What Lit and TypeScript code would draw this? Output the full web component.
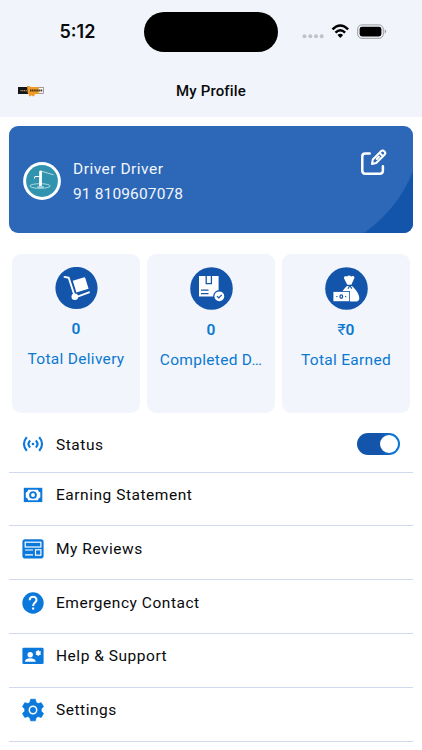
import { LitElement, html, css, svg } from "lit";
import { customElement } from "lit/decorators.js";

const stats = [
  {
    value: "0", label: "Total Delivery", cls: "delivery",
    icon: svg`<circle cx="21.5" cy="21" r="21.1" fill="#1455ac"/>
      <path d="M9.5 9.9 L13.7 10.7 L19.5 28.5 M20.5 30.3 L34 25.3" fill="none" stroke="#fff" stroke-width="1.9" stroke-linecap="round" stroke-linejoin="round"/>
      <circle cx="19.8" cy="29.7" r="3.3" fill="#fff"/>
      <path d="M17.8 13.7 L28.6 10.4 Q30 10.1 30.4 11.5 L33.6 21.7 L21.4 25.5 Z" fill="#fff"/>`,
  },
  {
    value: "0", label: "Completed D…", cls: "completed",
    icon: svg`<circle cx="21.5" cy="21.5" r="21.3" fill="#1455ac"/>
      <path d="M9 9H28.6V29.5H9Z" fill="#fff"/>
      <path d="M16.2 9V16.6H21.4V9M11 23.2H18.5M11 26.6H18.5" fill="none" stroke="#1455ac" stroke-width="1.3"/>
      <circle cx="29.3" cy="29.3" r="6.2" fill="#1455ac"/><circle cx="29.3" cy="29.3" r="4.9" fill="#fff"/>
      <path d="M27 29.1l1.7 1.8 3-3" fill="none" stroke="#1455ac" stroke-width="1.3"/>`,
  },
  {
    value: "₹0", label: "Total Earned", cls: "earned",
    icon: svg`<circle cx="21.5" cy="21.5" r="21.3" fill="#1455ac"/>
      <path d="M22.3 17.8C20.7 14.3 19.2 12 18.9 10.7C19.5 8.6 21.4 9.6 22 9.5C23 8.2 25 8.2 26.1 9.5C27.6 8.4 29 8.8 29.5 10.4C29 12.4 27.5 14.6 26.4 17.8Z" fill="#fff"/>
      <path d="M22 19H27C31.5 23 34.5 28 34.3 31.6Q34.1 34.4 31.3 34.4H23V24.7H17.2C18.2 22.7 20.2 20.8 22 19Z" fill="#fff"/>
      <path d="M24.7 18.8l-1.7 3M25 18.8l1.8 2.8" stroke="#1455ac" stroke-width="1.2"/>
      <rect x="8" y="24.5" width="16.6" height="10.2" fill="#fff" stroke="#1455ac" stroke-width=".8"/>
      <ellipse cx="16.3" cy="29.6" rx="1.3" ry="1.7" fill="none" stroke="#1455ac" stroke-width="1.3"/><path d="M11.2 29.6h1.3M20 29.6h1.3" stroke="#1455ac"/>`,
  },
];

const rows = [
  {
    label: "Status", cls: "status", toggle: true,
    icon: svg`<g fill="none" stroke="#0b78dc" stroke-width="2.1"><path d="M5.8 5.2Q.1 12 5.8 18.8M18.2 5.2Q23.9 12 18.2 18.8M9.2 8.4Q5.7 12 9.2 15.6M14.8 8.4Q18.3 12 14.8 15.6"/></g><circle cx="12" cy="12" r="1.3" fill="#0b78dc"/>`,
  },
  {
    label: "Earning Statement", cls: "earning",
    icon: svg`<rect x="2.8" y="4.8" width="18.5" height="14.3" fill="#0b78dc"/><path d="M7.1 6.8H17Q17 9 19.3 9.5V14.5Q17 15 17 17.2H7.1Q7.1 15 4.8 14.5V9.5Q7.1 9 7.1 6.8Z" fill="#fff"/><circle cx="12" cy="12" r="2.9" fill="none" stroke="#0b78dc" stroke-width="1.9"/>`,
  },
  {
    label: "My Reviews", cls: "reviews",
    icon: svg`<rect x="1.4" y="2.3" width="21.2" height="19.2" rx="2.8" fill="#0b78dc"/><g fill="none" stroke="#fff" stroke-width="1.2"><rect x="4.2" y="5.2" width="15.7" height="4.8"/><rect x="14.5" y="12.8" width="5.4" height="5.4"/><path d="M4 13H12M4 17.8H12"/></g>`,
  },
  {
    label: "Emergency Contact", cls: "emergency",
    icon: svg`<circle cx="12" cy="12" r="10.7" fill="#0b78dc"/><path d="M8.7 9.2C8.8 4.7 15.5 4.7 15.5 9C15.5 11.6 12.2 11.7 12.2 15" fill="none" stroke="#fff" stroke-width="2"/><rect x="11.1" y="16.5" width="2.1" height="2.1" fill="#fff"/>`,
  },
  {
    label: "Help & Support", cls: "help",
    icon: svg`<rect x="1.4" y="3.8" width="21.2" height="16.2" rx="1.3" fill="#0b78dc"/><circle cx="9.2" cy="10.7" r="2.7" fill="#fff"/><path d="M3.9 17.7Q4 14.4 9.2 14.2Q14.5 14.4 14.7 17.7Z" fill="#fff"/><path d="M17.3 6.2v5.6M14.9 7.6l4.8 2.8M14.9 10.4l4.8-2.8" stroke="#fff" stroke-width="1.6"/><circle cx="17.3" cy="9" r="1.8" fill="#fff"/>`,
  },
  {
    label: "Settings", cls: "settings",
    icon: svg`<path d="M9.7 1.3h4.6l.8 3.1 2 1.2 3.1-.9 2.3 4-2.3 2.2v2.3l2.3 2.2-2.3 4-3.1-.9-2 1.2-.8 3.1H9.7l-.8-3.1-2-1.2-3.1.9-2.3-4 2.3-2.2v-2.3L1.5 8.7l2.3-4 3.1.9 2-1.2Z" fill="#0b78dc" stroke="#0b78dc" stroke-width=".8" stroke-linejoin="round"/><circle cx="12" cy="12" r="3.7" fill="none" stroke="#fff" stroke-width="1.5"/>`,
  },
];

@customElement("app-root")
export class AppRoot extends LitElement {
  static styles = css`
    :host { display: block; height: 750px; overflow: hidden; background: #fff; font-family: Roboto, "Noto Sans", sans-serif; color: #090a0c; }
    * { box-sizing: border-box; }
    svg { display: block; flex: none; }
    .header { height: 117px; background: #f1f5fb; }
    .bar { height: 64px; display: grid; grid-template-columns: 144px 134px 144px; }
    .time { padding: 21px 0 0 59.5px; font: 600 18px/22px Inter, sans-serif; letter-spacing: 0; }
    .island { margin-top: 12px; height: 40px; border-radius: 20px; background: #000; }
    .signals { padding: 23px 0 0 24px; }
    .nav { height: 53px; display: grid; grid-template-columns: 1fr auto 1fr; align-items: center; }
    .logo { margin-left: 18px; }
    .title { padding-top: 1px; font-size: 15px; font-weight: 500; line-height: 20px; letter-spacing: .15px; }
    .profile { position: relative; margin: 8.5px 9px 0; height: 107.5px; border-radius: 9px; background: #2d67b7; overflow: hidden; display: flex; color: #fff; }
    .corner { position: absolute; right: 0; bottom: 0; }
    .avatar { margin: 36px 0 0 13.5px; }
    .person { margin: 31px 0 0 12.5px; flex: 1; font-size: 15.5px; line-height: 25px; color: #f1f6fe; }
    .name { letter-spacing: .5px; }
    .phone { letter-spacing: .14px; }
    .edit { margin: 21.5px 25px 0 0; }
    .stats { margin: 21px 12px 0; display: grid; grid-template-columns: repeat(3, 128px); gap: 7px; }
    .stat { height: 159px; border-radius: 9px; background: #f2f6fc; padding-top: 12.5px; display: flex; flex-direction: column; align-items: center; color: #0b78d1; }
    .value { margin-top: 10px; font-size: 15.5px; line-height: 20px; font-weight: 600; }
    .caption { margin-top: 10.5px; font-size: 15.5px; line-height: 20px; white-space: nowrap; letter-spacing: .3px; }
    .delivery .value { margin-top: 9px; }
    .delivery .caption { margin-top: 10px; }
    .rupee { font-weight: 400; }
    .row { margin: 0 9px; height: 53.75px; padding: 0 13px 7.5px 11.5px; border-bottom: 1px solid #d1d9ef; display: flex; align-items: center; }
    .status { height: 59.5px; padding: 4px 13px 0 11.5px; }
    .status .text { padding-top: 1px; }
    .earning { padding-bottom: 7px; }
    .settings { height: 54.5px; padding-bottom: 8px; }
    .text { margin-left: 11.5px; font-size: 15.5px; line-height: 20px; letter-spacing: .53px; }
    .toggle { margin-left: auto; width: 43px; height: 22px; border-radius: 11px; padding: 2px; background: linear-gradient(90deg, #1455ac 55%, #0c76da 85%); display: flex; justify-content: flex-end; }
    .knob { width: 18px; height: 18px; border-radius: 50%; background: #fff; }
  `;

  render() {
    return html`
      <header class="header">
        <div class="bar">
          <div class="time">5:12</div>
          <div class="island"></div>
          <div class="signals">
            <svg width="86" height="18" viewBox="0 0 86 18">
              <g fill="#bfc3c9"><circle cx="2.5" cy="13.3" r="2"/><circle cx="8.3" cy="13.3" r="2"/><circle cx="14" cy="13.3" r="2"/><circle cx="19.7" cy="13.3" r="2"/></g>
              <g fill="none" stroke="#000" stroke-width="2.5"><path d="M30.5 6.3Q38.3-1.3 46.1 6.3M33.5 9.6Q38.3 5 43.1 9.6"/></g>
              <path d="M35.5 12Q38.3 9.7 41.1 12L38.3 15Z" fill="#000"/>
              <rect x="55.7" y="1.9" width="25.6" height="13.4" rx="4.2" fill="none" stroke="#989ba0"/>
              <rect x="57.6" y="3.8" width="21.8" height="9.6" rx="2.4"/><path d="M82.7 6.3Q85.8 8.5 82.7 10.7Z" fill="#989ba0"/>
            </svg>
          </div>
        </div>
        <div class="nav">
          <svg class="logo" width="27" height="14" viewBox="0 0 27 14">
            <rect x=".4" y="3.4" width="25.2" height="6.2" fill="#fafafa" stroke="#777" stroke-width=".7"/>
            <path d="M0 3H10V10H0Z" fill="#161616"/><path d="M9 2h2.5l.7 1H20.8V10H17L16 12.2H14.5L13.8 11 12.8 12.2H11L10.8 10 9.7 9Z" fill="#f09b25"/>
            <path d="M2.5 6.6H9" stroke="#ad8f69" stroke-width="1.2" stroke-dasharray="1.2 .5"/><path d="M12 6.6H24.8" stroke="#452f16" stroke-width="2" stroke-dasharray="1.5 .6"/>
          </svg>
          <div class="title">My Profile</div>
        </div>
      </header>
      <section class="profile">
        <svg class="corner" width="49" height="62" viewBox="0 0 49 62"><path d="M0 62Q34 38 49 0V62Z" fill="#1455ac"/></svg>
        <svg class="avatar" width="38" height="38" viewBox="0 0 38 38">
          <circle cx="19" cy="19" r="18.9" fill="#fff"/><circle cx="19" cy="19" r="15.9" fill="#3193ad"/>
          <ellipse cx="17" cy="24" rx="10.2" ry="2.3" fill="none" stroke="#cae9ef" stroke-width=".8"/>
          <path d="M16.2 9.2Q17.6 8 19 9.2L18.8 24H16.1Z" fill="#fff"/><path d="M14.4 25H20.7M16.5 14.5H12.3Q11.5 14.5 11.5 16.5" fill="none" stroke="#fff" stroke-width="1.2"/>
          <path d="M18.5 9.2L30.5 12.8" stroke="#d8eff2" stroke-width=".8"/>
        </svg>
        <div class="person"><div class="name">Driver Driver</div><div class="phone">91 8109607078</div></div>
        <svg class="edit" width="28" height="30" viewBox="0 0 28 30" fill="none" stroke="#fff" stroke-linecap="round" stroke-linejoin="round">
          <path d="M9.7 6.4H5.2Q2.3 6.4 2.3 9.3V23.8Q2.3 26.7 5.2 26.7H20Q22.9 26.7 22.9 23.8V19.2" stroke-width="2.5"/>
          <path d="M12 17L12.8 12.6L21 4.2Q22.7 2.7 24.5 4.4Q26 6.1 24.5 7.7L16.2 16Z M20 6.5L22.5 8.8 M16.8 11.9L18.9 9.8" stroke-width="2.1"/>
        </svg>
      </section>
      <section class="stats">
        ${stats.map((s) => html`<div class="stat ${s.cls}">
          <svg width="43" height="43" viewBox="0 0 43 43">${s.icon}</svg>
          <div class="value">${s.value.startsWith("₹") ? html`<span class="rupee">₹</span>${s.value.slice(1)}` : s.value}</div>
          <div class="caption">${s.label}</div>
        </div>`)}
      </section>
      <main>
        ${rows.map((r) => html`<div class="row ${r.cls}">
          <svg width="24" height="24" viewBox="0 0 24 24">${r.icon}</svg>
          <div class="text">${r.label}</div>
          ${r.toggle ? html`<div class="toggle"><div class="knob"></div></div>` : ""}
        </div>`)}
      </main>
    `;
  }
}
